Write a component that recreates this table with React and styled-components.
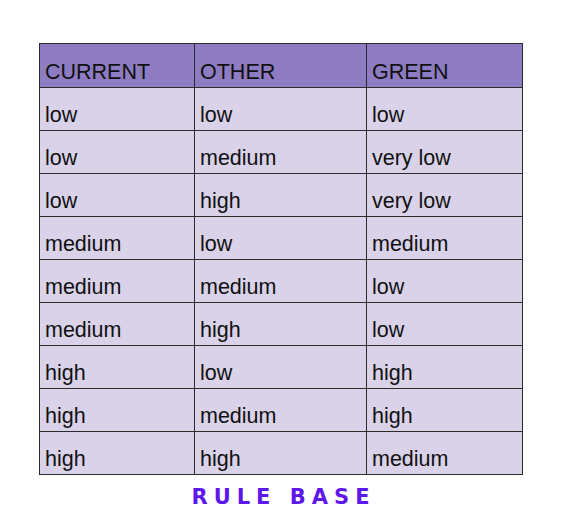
import React from 'react';
import styled, { createGlobalStyle } from 'styled-components';

const GlobalStyle = createGlobalStyle`
  body {
    margin: 0;
    background: #ffffff;
    font-family: "Liberation Sans", Arial, sans-serif;
  }
`;

const headers = ['CURRENT', 'OTHER', 'GREEN'];

const rows = [
  ['low', 'low', 'low'],
  ['low', 'medium', 'very low'],
  ['low', 'high', 'very low'],
  ['medium', 'low', 'medium'],
  ['medium', 'medium', 'low'],
  ['medium', 'high', 'low'],
  ['high', 'low', 'high'],
  ['high', 'medium', 'high'],
  ['high', 'high', 'medium'],
];

const Page = styled.div`
  width: 561px;
  height: 519px;
  padding-top: 43px;
  box-sizing: border-box;
  display: flex;
  flex-direction: column;
  align-items: center;
`;

const Grid = styled.div`
  display: grid;
  grid-template-columns: 155px 172px 156px;
  grid-template-rows: 44px;
  grid-auto-rows: 43px;
  border-left: 1px solid #2b2b2b;
  border-top: 1px solid #2b2b2b;
  margin-left: 1px;
`;

const Cell = styled.div`
  box-sizing: border-box;
  display: flex;
  align-items: flex-end;
  padding: 0 5px 4px 5px;
  border-right: 1px solid #2b2b2b;
  border-bottom: 1px solid #2b2b2b;
  background: ${(p) => (p.$head ? '#8e7cc3' : '#d9d2e9')};
  color: #111;
  font-size: 21.5px;
  line-height: 1;
  white-space: nowrap;
`;

const Title = styled.div`
  margin-top: 12px;
  margin-left: 6px;
  font-family: "DejaVu Sans", sans-serif;
  font-weight: bold;
  font-size: 21px;
  line-height: 1;
  letter-spacing: 6px;
  color: #5e17eb;
`;

export default function App() {
  return (
    <Page>
      <GlobalStyle />
      <Grid>
        {headers.map((h) => (
          <Cell key={h} $head>{h}</Cell>
        ))}
        {rows.map((r, i) =>
          r.map((c, j) => <Cell key={`${i}-${j}`}>{c}</Cell>)
        )}
      </Grid>
      <Title>RULE BASE</Title>
    </Page>
  );
}
